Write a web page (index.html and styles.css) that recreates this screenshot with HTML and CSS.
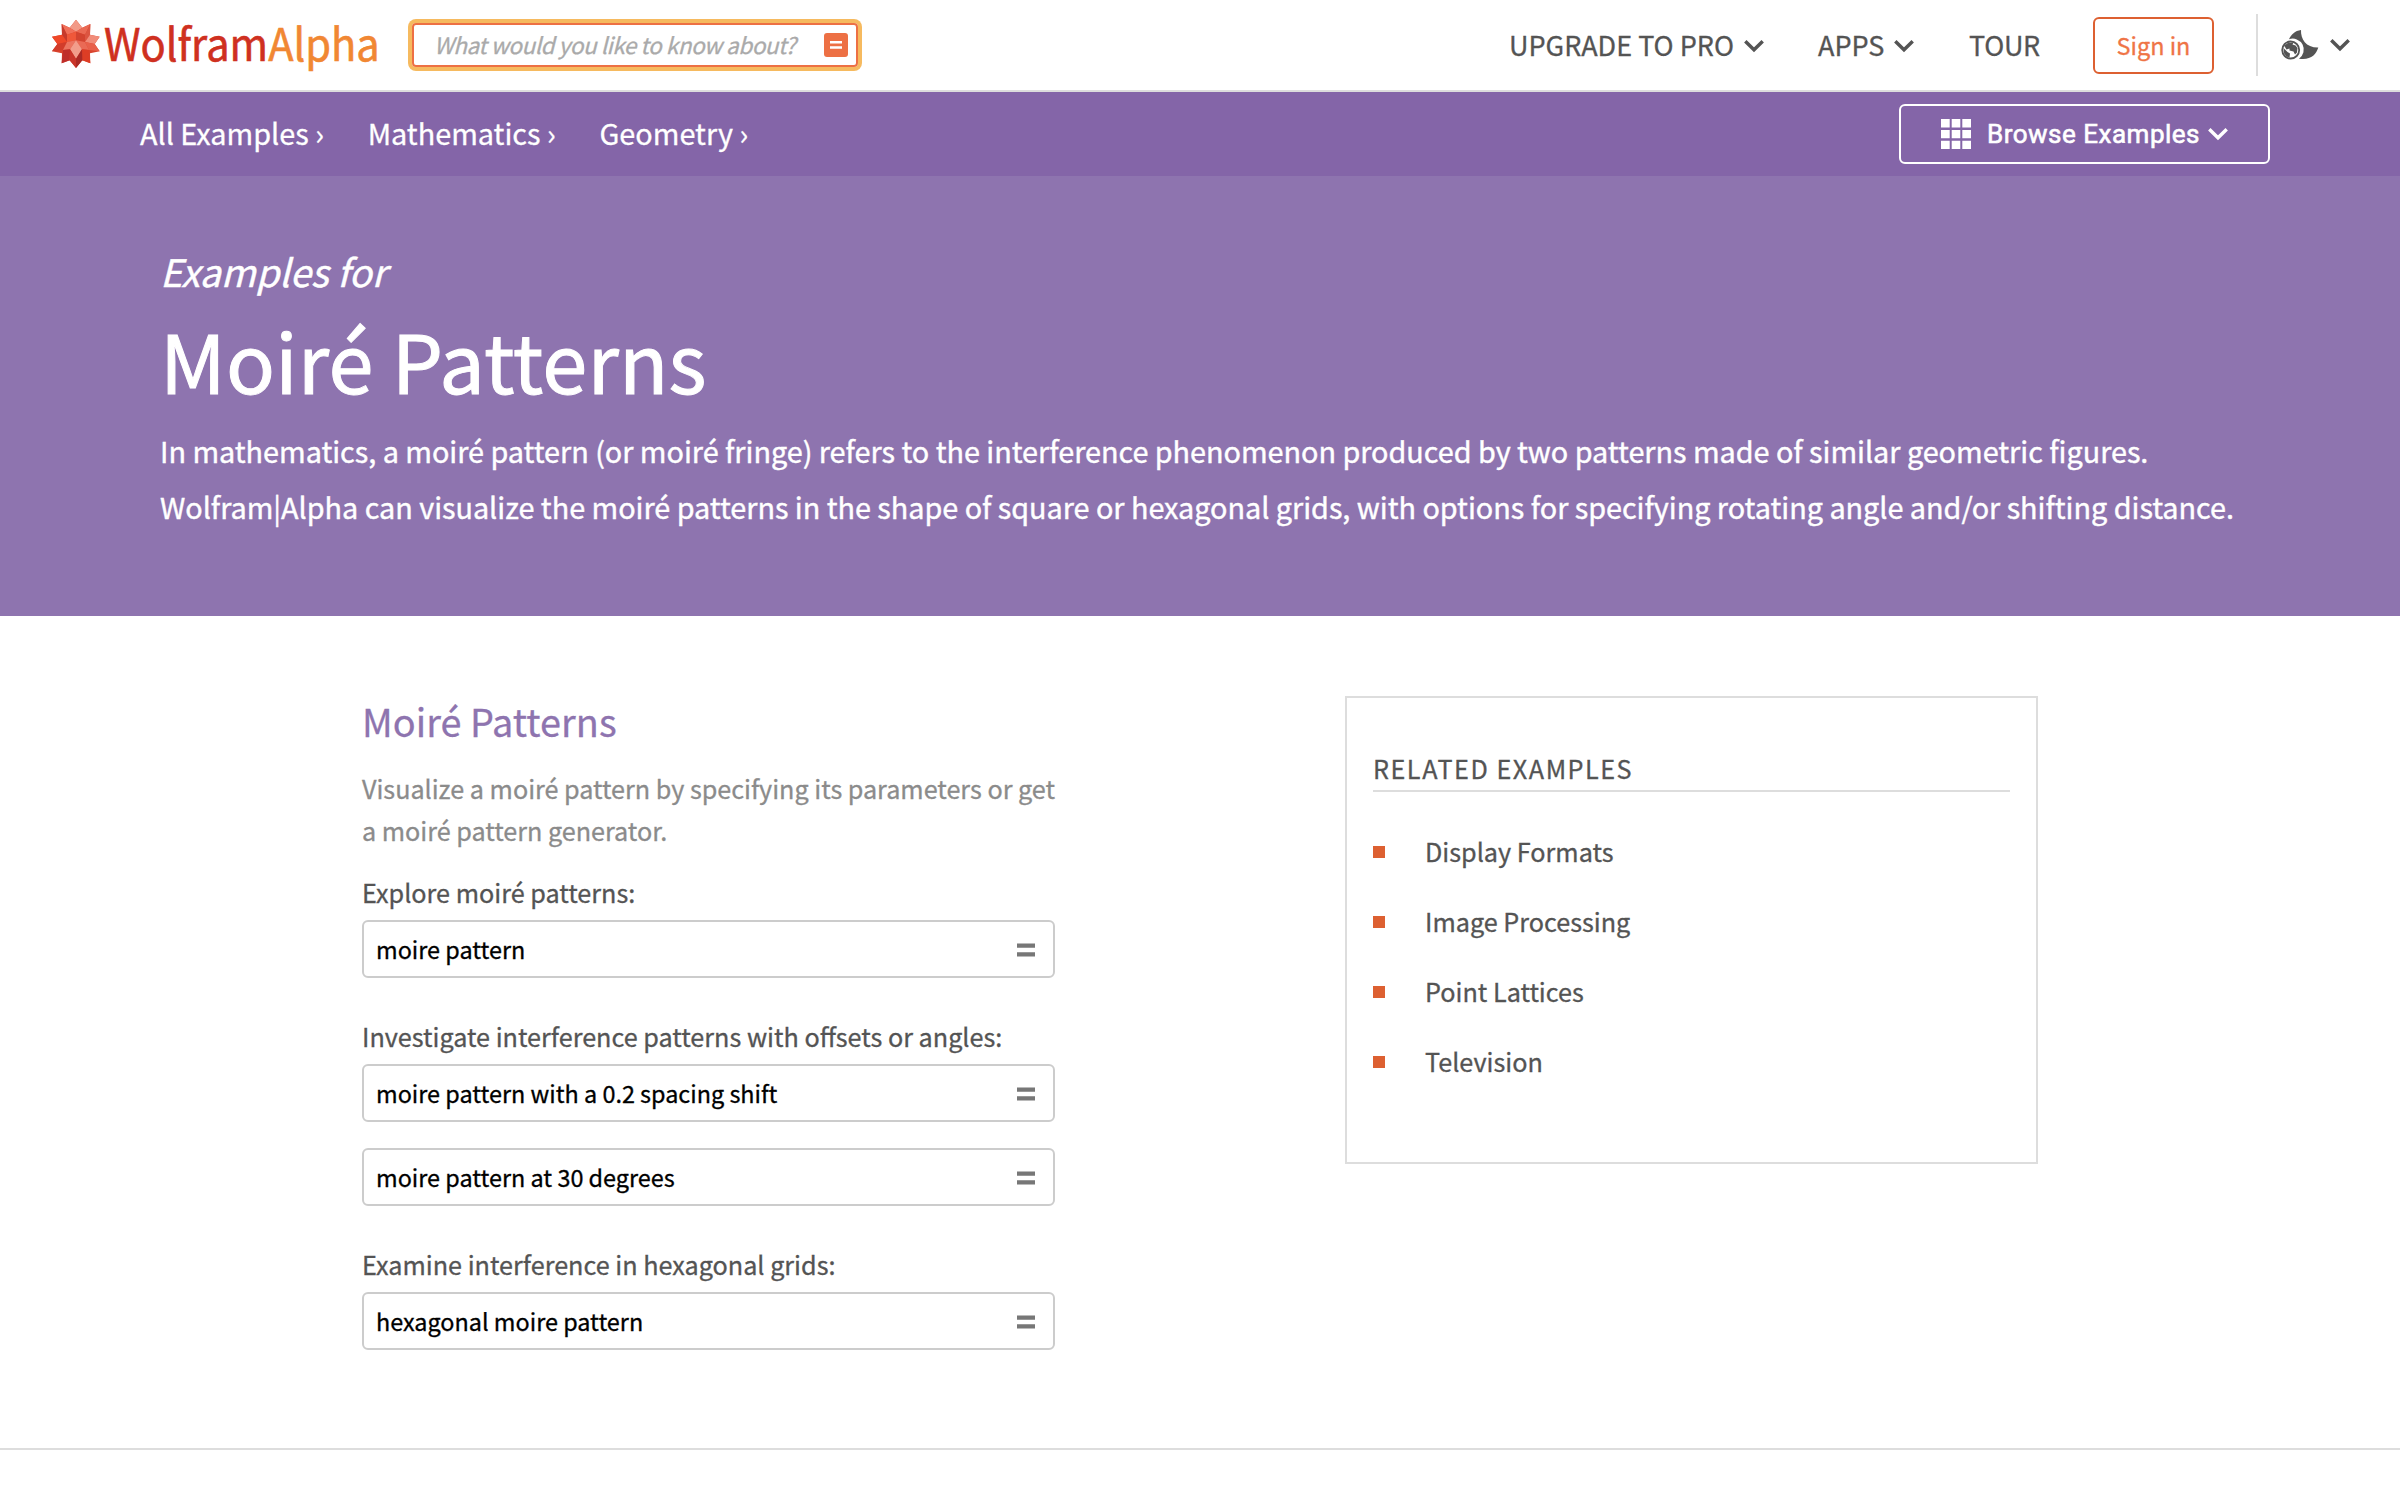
FILE: index.html
```
<!DOCTYPE html>
<html lang="en">
<head>
<meta charset="utf-8">
<title>Wolfram|Alpha Examples: Moiré Patterns</title>
<link rel="stylesheet" href="styles.css">
</head>
<body>
<svg class="defs" width="0" height="0" aria-hidden="true">
  <symbol id="chevron" viewBox="0 0 20 14"><path d="M1.3 2.2 10 10.8l8.7-8.6" fill="none" stroke="currentColor" stroke-width="3.4"/></symbol>
  <symbol id="equals" viewBox="0 0 18 14"><path d="M0 .5h18v4.2H0zM0 9.2h18v4.3H0z" fill="currentColor"/></symbol>
</svg>

<header class="topbar">
  <a class="logo">
    <svg width="52" height="60" viewBox="0 0 52 60">
      <g transform="translate(-4 -1) scale(.33333)">
        <path fill="#d9432d" d="M84 17 103 41 127 30 126 62 155 68 140 90 155 112 126 118 127 148 103 139 84 162 65 139 41 148 42 118 12 112 28 90 12 68 42 62 41 30 65 41z"/>
        <path fill="#f29a87" d="M84 17 103 41 84 53 65 41z"/>
        <path fill="#f0705a" d="M41 30 65 41 84 53 57 62z"/>
        <path fill="#c73a2c" d="M41 30 57 62 57 84 42 62z"/>
        <path fill="#ea6a54" d="M127 30 103 41 84 53 111 62z"/>
        <path fill="#dc5541" d="M127 30 111 62 111 84 126 62z"/>
        <path fill="#ef4829" d="M12 68 42 62 57 84 28 90z"/>
        <path fill="#f18c79" d="M155 68 126 62 111 84 140 90z"/>
        <path fill="#ef583a" d="M57 62 84 53 84 79 57 84z"/>
        <path fill="#d34430" d="M111 62 84 53 84 79 111 84z"/>
        <path fill="#d23c2a" d="M28 90 57 84 45 108 12 112z"/>
        <path fill="#e8604a" d="M140 90 111 84 123 108 155 112z"/>
        <path fill="#ec7460" d="M57 84 84 79 66 106 45 108z"/>
        <path fill="#ea6a55" d="M111 84 84 79 102 106 123 108z"/>
        <path fill="#f29d8b" d="M84 79 102 106 84 134 66 106z"/>
        <path fill="#bf2e2a" d="M45 108 66 106 65 139 41 148z"/>
        <path fill="#dd3d25" d="M123 108 102 106 103 139 127 148z"/>
        <path fill="#c9352a" d="M66 106 84 134V162L65 139z"/>
        <path fill="#ab2a25" d="M102 106 84 134V162l19-23z"/>
      </g>
    </svg>
    <span class="logo-name">Wolfram<span class="logo-alpha">Alpha</span></span>
  </a>
  <div class="search">
    <span class="search-hint">What would you like to know about?</span>
    <span class="search-go"><svg width="12" height="8" viewBox="0 0 12 8"><path d="M0 0h12v2.6H0zM0 5.2h12v2.6H0z" fill="#fff"/></svg></span>
  </div>
  <nav class="menu">
    <a class="menu-item upgrade">UPGRADE TO PRO <svg class="chev"><use href="#chevron"/></svg></a>
    <a class="menu-item apps">APPS <svg class="chev"><use href="#chevron"/></svg></a>
    <a class="menu-item tour">TOUR</a>
    <a class="signin">Sign in</a>
    <span class="divider"></span>
    <a class="theme">
      <svg width="38" height="32" viewBox="0 0 38 32">
        <path fill="#545454" d="M20 1C19.600 10 25 18.800 37.300 18.600C35 26 29.500 31.400 18 29.700A11 11 0 0 0 8 10.300C10 5.500 14 1.800 20 1Z"/>
        <circle cx="9.700" cy="21" r="8.500" fill="#fff" stroke="#545454" stroke-width="1.800"/>
        <path fill="#545454" d="M3 16.500 7 14 12.500 13.500 11.500 15.500 14.500 16.500 16.500 19 16 23.500 14 25.500 12.500 22.500 8.500 21.500 8.500 19.500 5.500 20.500ZM2.500 19 6.500 23 9 24.500 8.500 28.500 5.500 27.500 2.800 24Z"/>
      </svg>
      <svg class="chev"><use href="#chevron"/></svg>
    </a>
  </nav>
</header>

<div class="crumbbar">
  <nav class="crumbs">
    <a class="crumb">All Examples<span>›</span></a>
    <a class="crumb">Mathematics<span>›</span></a>
    <a class="crumb">Geometry<span>›</span></a>
  </nav>
  <a class="browse">
    <svg class="grid-icon" width="30" height="30" viewBox="0 0 30 30"><path fill="#fff" d="M0 0h8.700v8.500H0zM10.700 0h8.600v8.500h-8.600zM21.300 0H30v8.500h-8.700zM0 11h8.700v8.200H0zM10.700 11h8.600v8.200h-8.600zM21.300 11H30v8.200h-8.700zM0 21.700h8.700V30H0zM10.700 21.700h8.600V30h-8.600zM21.300 21.700H30V30h-8.700z"/></svg>
    <span>Browse Examples</span>
    <svg class="chev"><use href="#chevron"/></svg>
  </a>
</div>

<section class="hero">
  <div class="kicker">Examples for</div>
  <h1>Moiré Patterns</h1>
  <p>In mathematics, a moiré pattern (or moiré fringe) refers to the interference phenomenon produced by two patterns made of similar geometric figures.<br>Wolfram|Alpha can visualize the moiré patterns in the shape of square or hexagonal grids, with options for specifying rotating angle and/or shifting distance.</p>
</section>

<main class="content">
  <section class="examples">
    <h2>Moiré Patterns</h2>
    <p class="intro">Visualize a moiré pattern by specifying its parameters or get<br>a moiré pattern generator.</p>
    <div class="group">
      <h3>Explore moiré patterns:</h3>
      <a class="query">moire pattern<svg class="eq"><use href="#equals"/></svg></a>
    </div>
    <div class="group">
      <h3>Investigate interference patterns with offsets or angles:</h3>
      <a class="query">moire pattern with a 0.2 spacing shift<svg class="eq"><use href="#equals"/></svg></a>
      <a class="query">moire pattern at 30 degrees<svg class="eq"><use href="#equals"/></svg></a>
    </div>
    <div class="group">
      <h3>Examine interference in hexagonal grids:</h3>
      <a class="query">hexagonal moire pattern<svg class="eq"><use href="#equals"/></svg></a>
    </div>
  </section>
  <aside class="related">
    <h4>RELATED EXAMPLES</h4>
    <ul>
      <li>Display Formats</li>
      <li>Image Processing</li>
      <li>Point Lattices</li>
      <li>Television</li>
    </ul>
  </aside>
</main>
</body>
</html>
```
FILE: styles.css
```
* { box-sizing: border-box; }

body {
  margin: 0;
  background: #fff;
  color: #545454;
  font-family: "Noto Sans CJK SC", "Noto Sans", sans-serif;
  -webkit-text-stroke: 0.3px currentColor;
}

h1, h2, h3, h4, p, ul { margin: 0; padding: 0; font-weight: 400; }
svg { display: block; flex: none; }
.defs { display: none; }
.chev { width: 20px; height: 14px; }

/* Top bar */
.topbar {
  display: flex;
  align-items: center;
  height: 92px;
  padding: 0 50px 0 52px;
  border-bottom: 2px solid #ddd;
}
.logo { display: flex; align-items: center; width: 330px; height: 66px; }
.logo-name {
  flex: none;
  padding-bottom: 6px;
  color: #cf3020;
  font-size: 45px;
  line-height: 66px;
  white-space: nowrap;
  transform: scaleX(0.925);
  transform-origin: left;
  -webkit-text-stroke-width: 0.6px;
}
.logo-alpha { color: #f18733; }
.search {
  display: flex;
  align-items: center;
  justify-content: space-between;
  width: 446px;
  height: 44px;
  margin-left: 30px;
  padding: 0 8px 0 20px;
  border: 2px solid #ed7044;
  border-radius: 4px;
  box-shadow: 0 0 0 4px #f6ba5f;
}
.search-hint {
  padding-bottom: 2px;
  color: #aaa;
  font-size: 22.5px;
  font-style: italic;
  letter-spacing: -0.48px;
  line-height: 36px;
  white-space: nowrap;
}
.search-go {
  display: flex;
  align-items: center;
  justify-content: center;
  width: 24px;
  height: 24px;
  border-radius: 3px;
  background: #ed7044;
}
.menu {
  display: flex;
  align-items: center;
  margin-left: auto;
  white-space: nowrap;
}
.menu-item {
  display: flex;
  align-items: center;
  justify-content: space-between;
  font-size: 27px;
  line-height: 40px;
}
.menu-item .chev { margin-top: 1px; }
.upgrade { width: 255px; }
.apps { width: 96px; margin-left: 54px; }
.tour { width: 71px; margin-left: 55px; letter-spacing: -0.3px; }
.signin {
  width: 121px;
  height: 57px;
  margin-left: 53px;
  border: 2px solid #dd6031;
  border-radius: 6px;
  color: #ef7446;
  font-size: 23.4px;
  line-height: 53px;
  text-align: center;
}
.divider { width: 2px; height: 62px; margin-left: 42px; background: #ddd; }
.theme { display: flex; align-items: center; gap: 11px; margin-left: 23px; }

/* Breadcrumbs */
.crumbbar {
  display: flex;
  align-items: center;
  justify-content: space-between;
  height: 84px;
  padding: 0 130px 0 140px;
  background: #8465a8;
  color: #fff;
}
.crumbs { display: flex; gap: 43.8px; padding-bottom: 3px; font-size: 28.8px; line-height: 42px; }
.crumb { display: flex; gap: 6.5px; }
.browse {
  display: flex;
  align-items: center;
  width: 371px;
  height: 60px;
  padding-left: 40px;
  border: 2px solid #fff;
  border-radius: 6px;
  font: 400 26px/30px Roboto, sans-serif;
  letter-spacing: 0.5px;
  -webkit-text-stroke-width: 0.6px;
}
.browse span { width: 212px; margin-left: 16px; white-space: nowrap; }
.browse .chev { margin-left: 9px; }

/* Hero */
.hero {
  height: 440px;
  padding: 66px 0 0 160px;
  background: #8e74af;
  color: #fff;
  white-space: nowrap;
  -webkit-text-stroke-width: 0.4px;
}
.kicker { font-size: 37.8px; font-style: italic; line-height: 57px; }
.hero h1 { margin-top: 2px; font-size: 81px; line-height: 115px; letter-spacing: 0.18px; -webkit-text-stroke-width: 1px; }
.hero p { margin-top: 7px; font-size: 28.8px; line-height: 56px; letter-spacing: -0.025px; }

/* Content */
.content {
  display: flex;
  justify-content: space-between;
  align-items: flex-start;
  height: 834px;
  padding: 77px 362px 0;
  border-bottom: 2px solid #ddd;
}
.examples { width: 693px; white-space: nowrap; }
.examples h2 { color: #8e74af; font-size: 37.8px; line-height: 55px; letter-spacing: 0.05px; }
.intro { margin-top: 19px; color: #8b8b8b; font-size: 25.2px; line-height: 42px; letter-spacing: -0.02px; }
.group { margin-top: 40px; }
.intro + .group { margin-top: 23px; }
.group h3 { margin-bottom: 10px; font-size: 25.2px; line-height: 36px; }
.query {
  display: flex;
  align-items: center;
  justify-content: space-between;
  height: 58px;
  padding: 0 18px 0 12px;
  border: 2px solid #ccc;
  border-radius: 6px;
  color: #000;
  font-size: 23.4px;
}
.query + .query { margin-top: 26px; }
.eq { width: 18px; height: 14px; margin-top: 2px; color: #777; }

.related {
  width: 693px;
  height: 468px;
  margin-top: 3px;
  padding: 52px 26px 0;
  border: 2px solid #ddd;
}
.related h4 {
  padding-bottom: 4px;
  border-bottom: 2px solid #ddd;
  font-size: 25.2px;
  line-height: 36px;
  letter-spacing: 1.52px;
}
.related ul { margin-top: 24px; list-style: none; }
.related li { display: flex; align-items: center; gap: 40px; font-size: 25.2px; line-height: 70px; }
.related li::before { content: ""; width: 12px; height: 12px; margin-top: 2px; background: #dd6031; }
```
